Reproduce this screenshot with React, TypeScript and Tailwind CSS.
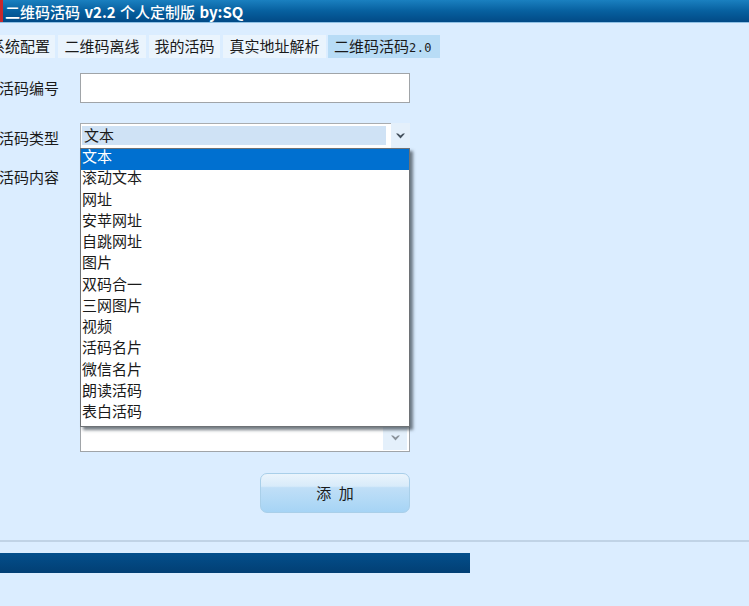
const tabs = ["系统配置", "二维码离线", "我的活码", "真实地址解析"];
const tabWidths = ["w-[70px] -ml-[15px]", "w-[88px]", "w-[71px]", "w-[103px]"];
const options = ["文本", "滚动文本", "网址", "安苹网址", "自跳网址", "图片", "双码合一", "三网图片", "视频", "活码名片", "微信名片", "朗读活码", "表白活码"];

const Arrow = ({ className }: { className: string }) => (
  <svg width="9" height="6" viewBox="0 0 9 6" className={className}>
    <path d="M0 0.5L2 0.5L4.5 2.5L7 0.5L9 0.5L4.5 5.5Z" fill="currentColor" />
  </svg>
);

const App = () => {
  return (
    <div className="w-[749px] h-[606px] overflow-hidden bg-[#dbedff] text-[15px] text-[#1a1a1a] font-['Noto_Sans_CJK_SC','Liberation_Sans',sans-serif]">
      <div className="h-[23px] flex items-center bg-gradient-to-b from-[#1a80c0] via-[#07609f] to-[#024a86] border-b border-[#8fc0e4] text-white text-[15px] leading-none">
        <div className="w-[3px] h-full bg-[#c8282c] mr-[2px]"></div>
        <span className="font-medium [word-spacing:1px]">二维码活码 <span className="font-bold">v2.2</span> 个人定制版 <span className="font-bold">by:SQ</span></span>
      </div>

      <div className="mt-[12px] h-[23px] flex gap-[3px] leading-[22px]">
        {tabs.map((tab, i) => (
          <div key={tab} className={`${tabWidths[i]} shrink-0 text-center bg-[#eaf4fd] whitespace-nowrap`}>
            {tab}
          </div>
        ))}
        <div className="w-[112px] ml-[-1px] pr-[2px] text-center bg-[#b8dcf6] whitespace-nowrap">
          二维码活码<span className="font-['DejaVu_Sans_Mono',monospace] text-[12px] tracking-[0.5px]">2.0</span>
        </div>
      </div>

      <div className="mt-[15px] flex items-center">
        <div className="w-[81px] -ml-px shrink-0 leading-none pb-[2px]">活码编号</div>
        <div className="w-[330px] h-[30px] bg-white border border-[#a0a4a8]"></div>
      </div>

      <div className="mt-[20px] flex items-center">
        <div className="w-[81px] -ml-px shrink-0 leading-none pt-[3px]">活码类型</div>
        <div className="relative w-[330px] h-[25px] bg-white border border-[#a8acb0] border-b-0 flex">
          <div className="w-[304px] h-[19px] mt-[2px] ml-px pl-[2px] bg-[#cfe2f5] leading-[18px]">文本</div>
          <div className="w-[19px] h-[25px] -mt-px -mr-px ml-[5px] bg-[#e4f0fb] flex items-center justify-center">
            <Arrow className="text-[#44505c]" />
          </div>
          <div className="absolute top-full left-[-1px] z-10 w-[330px] h-[279px] bg-white border border-[#6e7276] shadow-[3px_3px_3px_rgba(70,80,90,0.75)] leading-[13.25px]">
            {options.map((option, i) => (
              <div key={option} className={i === 0 ? "h-[21.25px] pl-px bg-[#0070d0] text-white" : "h-[21.25px] pl-px"}>
                {option}
              </div>
            ))}
          </div>
        </div>
      </div>

      <div className="mt-[20px] flex items-start">
        <div className="w-[81px] -ml-px shrink-0 leading-[18px] pr-px">活码内容</div>
        <div className="w-[330px] h-[284px] bg-white border border-[#a0a4a8] flex justify-end items-end">
          <div className="w-[24px] h-[24px] mr-[2px] mb-px bg-[#e4f0fb] flex items-center justify-center">
            <Arrow className="text-[#8a929a]" />
          </div>
        </div>
      </div>

      <button className="block mt-[21px] ml-[260px] w-[150px] h-[40px] pb-[2px] rounded-[7px] border border-[#a9cfe9] bg-[linear-gradient(to_bottom,#eaf4fc_0%,#d8ebfa_32%,#c0dff7_36%,#a6d4f5_100%)] text-[15px] [word-spacing:4px] leading-none">
        添 加
      </button>

      <div className="mt-[27px] h-[2px] bg-[#c0d3e6]"></div>
      <div className="mt-[11px] w-[470px] h-[20px] bg-gradient-to-b from-[#034f8c] to-[#023f74]"></div>
    </div>
  );
};

export default App;
